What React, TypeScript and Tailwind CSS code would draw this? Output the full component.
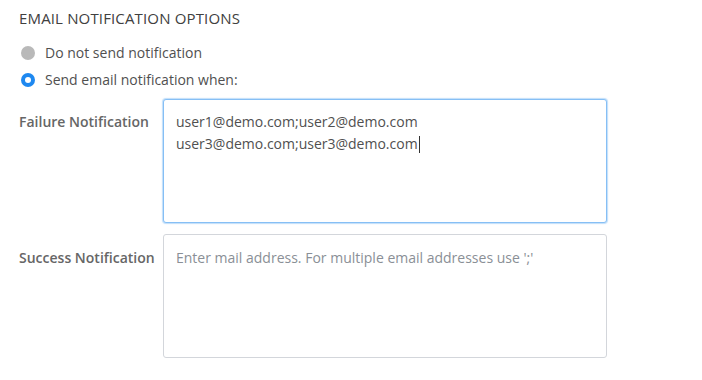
import React from "react";

const font = { fontFamily: '"Open Sans", "Noto Sans", Arial, sans-serif' };

export default function App() {
  return (
    <div className="w-[702px] h-[380px] bg-white pl-[19px] pt-[8px] text-[14px]" style={font}>
      <div className="text-[15px] leading-[20px] tracking-[0.15px] text-[#404040]">EMAIL NOTIFICATION OPTIONS</div>
      <div className="mt-[12px] flex flex-col">
        <label className="flex h-[26px] items-center gap-[10px] text-[#505050]">
          <span className="ml-[2px] h-[14px] w-[14px] rounded-full bg-[#b9b9b9]" />
          <span className="leading-[20px]">Do not send notification</span>
        </label>
        <label className="flex h-[27px] items-center gap-[10px] text-[#505050]">
          <span className="ml-[2px] flex h-[14px] w-[14px] items-center justify-center rounded-full bg-[#1e88f0]">
            <span className="h-[6px] w-[6px] rounded-full bg-white" />
          </span>
          <span className="leading-[20px]">Send email notification when:</span>
        </label>
      </div>
      <div className="mt-[6px] flex">
        <div className="w-[144px] pt-[12px] font-semibold leading-[22px] text-[#666666]">Failure Notification</div>
        <div className="h-[124px] w-[444px] rounded-[3px] border border-[#86bff5] bg-white pl-[12px] pt-[11px] leading-[22px] text-[#505050] shadow-[0_0_1px_1px_rgba(140,195,245,0.55)]">
          <div>user1@demo.com;user2@demo.com</div>
          <div className="flex items-center">
            <span>user3@demo.com;user3@demo.com</span>
            <span className="ml-[1px] inline-block h-[17px] w-[1px] bg-[#333333]" />
          </div>
        </div>
      </div>
      <div className="mt-[11px] flex">
        <div className="w-[144px] pt-[13px] font-semibold leading-[22px] text-[#666666]">Success Notification</div>
        <textarea
          readOnly
          className="h-[124px] w-[444px] resize-none rounded-[3px] border border-[#d3d6db] bg-white pl-[12px] pt-[12px] leading-[22px] text-[#505050] outline-none placeholder:text-[#8a8f96]"
          style={font}
          placeholder="Enter mail address. For multiple email addresses use ';'"
        />
      </div>
    </div>
  );
}
